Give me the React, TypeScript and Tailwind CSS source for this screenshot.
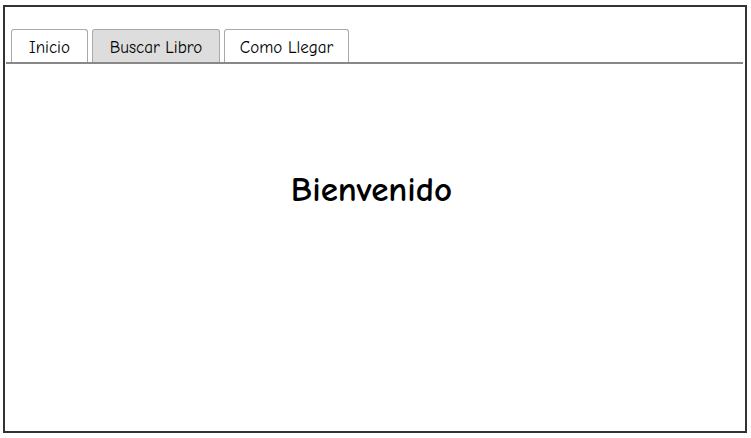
import React from "react";

const font = { fontFamily: '"Comic Sans MS", "Comic Neue", "DejaVu Sans", sans-serif' };

export default function App() {
  return (
    <div className="w-[751px] h-[438px] bg-white pt-[5px] pl-[3px] text-black" style={font}>
      <div className="w-[744px] h-[428px] border-2 border-[#333] flex flex-col">
        <div className="mt-[22px] ml-[1px] mr-[2px] flex gap-[4px] pl-[5px] border-b-2 border-[#888] items-end">
          <div className="w-[77px] h-[33px] border border-b-0 border-[#aaa] rounded-t-[3px] bg-white flex items-center justify-center text-[17px] leading-none pt-[2px]">
            Inicio
          </div>
          <div className="w-[128px] h-[33px] border border-b-0 border-[#aaa] rounded-t-[3px] bg-[#dddddd] flex items-center justify-center text-[17px] leading-none pt-[2px]">
            Buscar Libro
          </div>
          <div className="w-[125px] h-[33px] border border-b-0 border-[#aaa] rounded-t-[3px] bg-white flex items-center justify-center text-[17px] leading-none pt-[2px]">
            Como Llegar
          </div>
        </div>
        <div className="flex justify-center pt-[108px] pr-[7px]">
          <h1 className="text-[35px] font-bold leading-none">Bienvenido</h1>
        </div>
      </div>
    </div>
  );
}
